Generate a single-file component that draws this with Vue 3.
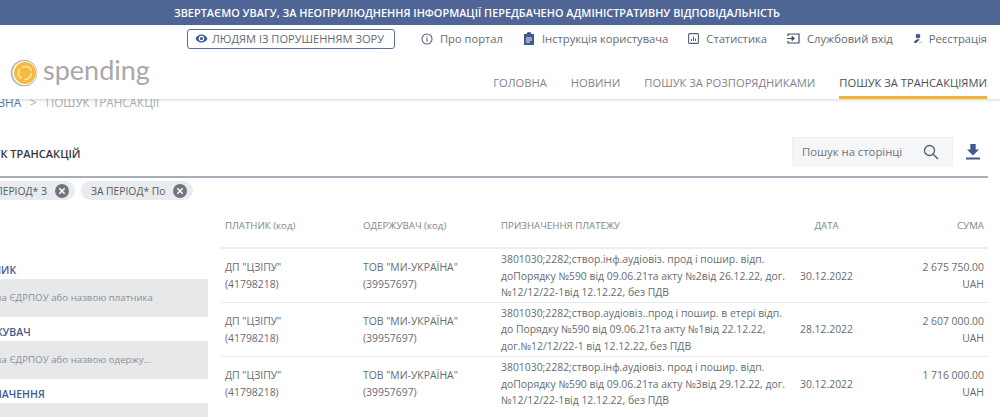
<template>
  <div class="app">
    <header class="header">
      <div class="notice">ЗВЕРТАЄМО УВАГУ, ЗА НЕОПРИЛЮДНЕННЯ ІНФОРМАЦІЇ ПЕРЕДБАЧЕНО АДМІНІСТРАТИВНУ ВІДПОВІДАЛЬНІСТЬ</div>
      <div class="top-row">
        <button class="eye-btn">
          <svg width="13" height="13" viewBox="0 0 24 24"><path fill="#3f5a8f" d="M12 4.500C7 4.500 2.700 7.600 1 12c1.700 4.400 6 7.500 11 7.500s9.300-3.100 11-7.500c-1.700-4.400-6-7.500-11-7.500zM12 17a5 5 0 1 1 0-10 5 5 0 0 1 0 10zm0-8a3 3 0 1 0 0 6 3 3 0 0 0 0-6z"/></svg>
          ЛЮДЯМ ІЗ ПОРУШЕННЯМ ЗОРУ
        </button>
        <nav class="top-links">
          <a>
            <svg width="12" height="12" viewBox="0 0 12 12"><circle cx="6" cy="6" r="5" fill="none" stroke="#55627a" stroke-width="1.100"/><path d="M6 5.300v3.200M6 3.200v1" stroke="#55627a" stroke-width="1.200"/></svg>
            Про портал
          </a>
          <a>
            <svg width="12" height="13" viewBox="0 0 12 13"><path fill="#3f5a8f" d="M1 2h2.500a2.500 2 0 0 1 5 0H11v11H1z"/><path d="M3 6h6M3 8h6M3 10h4" stroke="#fff" stroke-width=".9"/></svg>
            Інструкція користувача
          </a>
          <a>
            <svg width="11" height="11" viewBox="0 0 11 11"><rect x=".6" y=".6" width="9.800" height="9.800" rx="1" fill="none" stroke="#55627a" stroke-width="1.100"/><path d="M3.500 8V6M5.500 8V3.500M7.500 8V5.500" stroke="#3f5a8f" stroke-width="1"/></svg>
            Статистика
          </a>
          <a>
            <svg width="13" height="11" viewBox="0 0 13 11"><path d="M1 3V1h11v9H1V8" fill="none" stroke="#3f4f6b" stroke-width="1.200"/><path d="M0 5.500h6.500M5 3.500l2.500 2-2.500 2z" stroke="#3f4f6b" fill="#3f4f6b" stroke-width="1"/></svg>
            Службовий вхід
          </a>
          <a class="reg">
            <svg width="10" height="11" viewBox="0 0 11 12"><circle cx="5.500" cy="3.300" r="2.600" fill="#3f5a8f"/><path d="M1 11c.5-3 2-4.300 4.500-4.300 1 0 1.800.2 2.400.7-1.500.3-2.300 1.800-3.400 2.700-.9.700-2 1-3.500.9z" fill="#3f5a8f"/><path d="M6.500 10.500c1 .4 2.500 0 3.500-1.300" fill="none" stroke="#c9a23c" stroke-width="1"/></svg>
            Реєстрація
          </a>
        </nav>
      </div>
      <div class="nav-row">
        <div class="logo">
          <svg width="28" height="28" viewBox="0 0 28 28">
            <circle cx="14" cy="14" r="13.300" fill="#b9b9b9"/>
            <circle cx="14.600" cy="14" r="12" fill="#fff"/>
            <circle cx="15" cy="14" r="11" fill="#f6bb3c"/>
            <circle cx="15" cy="14" r="6.500" fill="none" stroke="#fde6ae" stroke-width="1.500" stroke-dasharray="10.600 3"/>
          </svg>
          <span class="logo-text">spending</span>
        </div>
        <nav class="main-nav">
          <a v-for="item in navItems" :key="item" :class="{ active: item === activeNav }">{{ item }}</a>
        </nav>
      </div>
    </header>

    <main class="content">
      <div class="breadcrumb"><span class="crumb-link">ГОЛОВНА</span><span class="crumb-sep">&gt;</span><span>ПОШУК ТРАНСАКЦІЇ</span></div>

      <div class="title-row">
        <h1>ПОШУК ТРАНСАКЦІЙ</h1>
        <div class="title-tools">
          <div class="page-search">
            <span>Пошук на сторінці</span>
            <svg width="16" height="16" viewBox="0 0 16 16"><circle cx="6.500" cy="6.500" r="5" fill="none" stroke="#55606e" stroke-width="1.300"/><path d="M10.200 10.200L15 15" stroke="#55606e" stroke-width="1.400"/></svg>
          </div>
          <svg class="download" width="14" height="16" viewBox="0 0 14 16"><path fill="#3f5a8f" d="M4.300 0h5.400v5.500H13L7 11.500 1 5.500h3.300zM0 13.500h14V15.500H0z"/></svg>
        </div>
      </div>

      <div class="chips">
        <span v-for="chip in chips" :key="chip" class="chip">
          {{ chip }}
          <svg width="14" height="14" viewBox="0 0 14 14"><circle cx="7" cy="7" r="7" fill="#6f7680"/><path d="M4.300 4.300l5.400 5.400M9.700 4.300l-5.400 5.400" stroke="#fff" stroke-width="1.500"/></svg>
        </span>
      </div>

      <div class="body">
        <aside class="filters">
          <div v-for="f in filters" :key="f.label" class="filter">
            <label>{{ f.label }}</label>
            <div class="filter-input">{{ f.placeholder }}</div>
          </div>
        </aside>

        <table class="results">
          <colgroup>
            <col class="c-payer"><col class="c-payer"><col class="c-purpose"><col class="c-date"><col>
          </colgroup>
          <thead>
            <tr>
              <th>ПЛАТНИК (код)</th>
              <th>ОДЕРЖУВАЧ (код)</th>
              <th>ПРИЗНАЧЕННЯ ПЛАТЕЖУ</th>
              <th class="center">ДАТА</th>
              <th class="right">СУМА</th>
            </tr>
          </thead>
          <tbody>
            <tr v-for="row in rows" :key="row.purpose">
              <td>ДП "ЦЗІПУ"<br>(41798218)</td>
              <td>ТОВ "МИ-УКРАЇНА"<br>(39957697)</td>
              <td class="purpose">{{ row.purpose }}</td>
              <td class="center">{{ row.date }}</td>
              <td class="right">{{ row.sum }}<br>UAH</td>
            </tr>
          </tbody>
        </table>
      </div>
    </main>
  </div>
</template>

<script setup>
const navItems = ['ГОЛОВНА', 'НОВИНИ', 'ПОШУК ЗА РОЗПОРЯДНИКАМИ', 'ПОШУК ЗА ТРАНСАКЦІЯМИ']
const activeNav = 'ПОШУК ЗА ТРАНСАКЦІЯМИ'

const chips = ['ЗА ПЕРІОД* З', 'ЗА ПЕРІОД* По']

const filters = [
  { label: 'ПЛАТНИК', placeholder: 'Код за ЄДРПОУ або назвою платника' },
  { label: 'ОДЕРЖУВАЧ', placeholder: 'Код за ЄДРПОУ або назвою одержу...' },
  { label: 'ПРИЗНАЧЕННЯ', placeholder: '' }
]

const rows = [
  {
    purpose: '3801030;2282;створ.інф.аудіовіз. прод і пошир. відп.\nдоПорядку №590 від 09.06.21та акту №2від 26.12.22, дог.\n№12/12/22-1від 12.12.22, без ПДВ',
    date: '30.12.2022',
    sum: '2 675 750.00'
  },
  {
    purpose: '3801030;2282;створ.аудіовіз..прод і пошир. в етері відп.\nдо Порядку №590 від 09.06.21та акту №1від 22.12.22,\nдог.№12/12/22-1 від 12.12.22, без ПДВ',
    date: '28.12.2022',
    sum: '2 607 000.00'
  },
  {
    purpose: '3801030;2282;створ.інф.аудіовіз. прод і пошир. відп.\nдоПорядку №590 від 09.06.21та акту №3від 29.12.22, дог.\n№12/12/22-1від 12.12.22, без ПДВ',
    date: '30.12.2022',
    sum: '1 716 000.00'
  }
]
</script>

<style>
html, body {
  margin: 0;
  background: #fff;
  overflow: hidden;
}
</style>

<style scoped>
.app {
  width: 1000px;
  height: 417px;
  overflow: hidden;
  font-family: "Open Sans", "Liberation Sans", sans-serif;
  font-size: 11px;
  color: #666b72;
  white-space: nowrap;
}

.header {
  position: relative;
  z-index: 2;
  height: 99px;
  background: #fff;
  box-shadow: 0 1px 3px rgba(0, 0, 0, 0.18);
}

.notice {
  height: 25px;
  line-height: 25px;
  padding-right: 46px;
  background: #4f6596;
  color: #fff;
  font-size: 10.900px;
  font-weight: 600;
  text-align: center;
  box-sizing: border-box;
}

.top-row {
  display: flex;
  align-items: center;
  justify-content: space-between;
  height: 25px;
  padding: 2px 13px 0 187px;
  box-sizing: border-box;
}

.eye-btn {
  display: flex;
  align-items: center;
  gap: 4px;
  width: 208px;
  height: 20px;
  padding: 0 0 0 7px;
  border: 1px solid #5a6f9c;
  border-radius: 3px;
  background: #fff;
  font: inherit;
  font-size: 11.100px;
  color: #666b72;
  box-sizing: border-box;
}

.top-links {
  display: flex;
  gap: 20px;
  font-size: 11.200px;
}

.top-links a {
  display: flex;
  align-items: center;
  gap: 7px;
}

.top-links a.reg {
  gap: 6px;
}

.nav-row {
  display: flex;
  justify-content: space-between;
  height: 49px;
  padding: 0 13px 0 10px;
  box-sizing: border-box;
}

.logo {
  display: flex;
  align-items: center;
  gap: 5px;
  height: 45px;
}

.logo-text {
  margin-top: -5px;
  font-family: Lato, sans-serif;
  font-size: 27px;
  line-height: 30px;
  color: #a8a8a8;
}

.main-nav {
  display: flex;
  gap: 24px;
  font-size: 11.200px;
}

.main-nav a {
  padding-top: 25px;
  color: #80858c;
}

.main-nav a.active {
  color: #4a4f55;
  border-bottom: 3px solid #f2b233;
  height: 21px;
}

.content {
  margin-left: -46px;
  padding: 0 12px 0 11px;
}

.breadcrumb {
  display: flex;
  gap: 9px;
  margin-top: -4px;
  height: 14px;
  line-height: 14px;
  font-size: 11.700px;
  color: #a9adb3;
}

.crumb-link {
  color: #5b76a8;
}

.title-row {
  display: flex;
  align-items: center;
  justify-content: space-between;
  height: 29px;
  margin-top: 28px;
  padding-bottom: 10px;
  border-bottom: 2px solid #a7aebb;
  margin-left: 35px;
}

h1 {
  margin: 4px 0 0 -35px;
  font-size: 11px;
  font-weight: 600;
  color: #33373d;
}

.title-tools {
  display: flex;
  align-items: center;
  gap: 13px;
  padding-right: 8px;
}

.page-search {
  display: flex;
  align-items: center;
  justify-content: space-between;
  width: 161px;
  height: 29px;
  padding: 0 13px 0 9px;
  background: #f5f6f8;
  border: 1px solid #eef0f3;
  font-size: 11.300px;
  color: #6d7278;
  box-sizing: border-box;
}

.chips {
  display: flex;
  gap: 6px;
  margin: 3px 0 0 5px;
}

.chip {
  display: flex;
  align-items: center;
  gap: 8px;
  height: 19px;
  padding: 0 6px 0 10px;
  border-radius: 10px;
  background: #e9ebee;
  font-size: 10.300px;
  color: #565b62;
}

.body {
  display: flex;
  gap: 13px;
}

.filters {
  flex: none;
  width: 243px;
  padding-top: 62px;
}

.filter + .filter {
  margin-top: 7px;
}

.filter label {
  display: block;
  height: 17px;
  line-height: 17px;
  font-size: 10.500px;
  font-weight: 600;
  color: #3f5a8f;
}

.filter-input {
  height: 38px;
  line-height: 38px;
  padding-left: 12px;
  background: #e7e8ea;
  font-size: 9.700px;
  color: #8a8f96;
}

.results {
  flex: none;
  width: 767px;
  table-layout: fixed;
  border-collapse: collapse;
  align-self: flex-start;
  font-size: 10.400px;
}

.c-payer {
  width: 138px;
}

.c-purpose {
  width: 290px;
}

.c-date {
  width: 79px;
}

th {
  height: 48px;
  padding: 4px 4px 0;
  font-size: 9.700px;
  font-weight: 400;
  text-align: left;
  color: #80858c;
  border-bottom: 2px solid #eceef0;
  box-sizing: border-box;
}

td {
  height: 54px;
  padding: 1px 4px 0;
  line-height: 16.500px;
  vertical-align: middle;
  border-bottom: 1px solid #e8eaec;
  box-sizing: border-box;
}

tbody tr:last-child td {
  border-bottom: 0;
}

.purpose {
  white-space: pre;
}

.center {
  text-align: center;
}

.right {
  text-align: right;
}
</style>
